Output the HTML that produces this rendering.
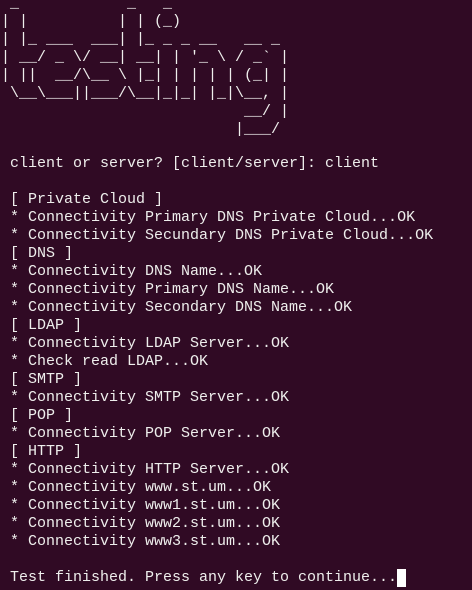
<!DOCTYPE html>
<html><head><meta charset="utf-8"><style>
html,body{margin:0;padding:0;background:#300a24;width:472px;height:590px;overflow:hidden}
pre{margin:0;position:absolute;left:10px;top:-7px;font-family:"Liberation Mono",monospace;font-size:15px;line-height:18px;color:#eeeeec}
pre.a{left:1px;top:-5px}
.c{display:inline-block;width:9px;height:18px;background:#fff;vertical-align:top}
</style></head><body><pre class="a"> _            _   _
| |          | | (_)
| |_ ___  ___| |_ _ _ __   __ _
| __/ _ \/ __| __| | '_ \ / _` |
| ||  __/\__ \ |_| | | | | (_| |
 \__\___||___/\__|_|_| |_|\__, |
                           __/ |
                          |___/</pre><pre>









client or server? [client/server]: client

[ Private Cloud ]
* Connectivity Primary DNS Private Cloud...OK
* Connectivity Secundary DNS Private Cloud...OK
[ DNS ]
* Connectivity DNS Name...OK
* Connectivity Primary DNS Name...OK
* Connectivity Secondary DNS Name...OK
[ LDAP ]
* Connectivity LDAP Server...OK
* Check read LDAP...OK
[ SMTP ]
* Connectivity SMTP Server...OK
[ POP ]
* Connectivity POP Server...OK
[ HTTP ]
* Connectivity HTTP Server...OK
* Connectivity www.st.um...OK
* Connectivity www1.st.um...OK
* Connectivity www2.st.um...OK
* Connectivity www3.st.um...OK

Test finished. Press any key to continue...<span class="c"></span></pre></body></html>
